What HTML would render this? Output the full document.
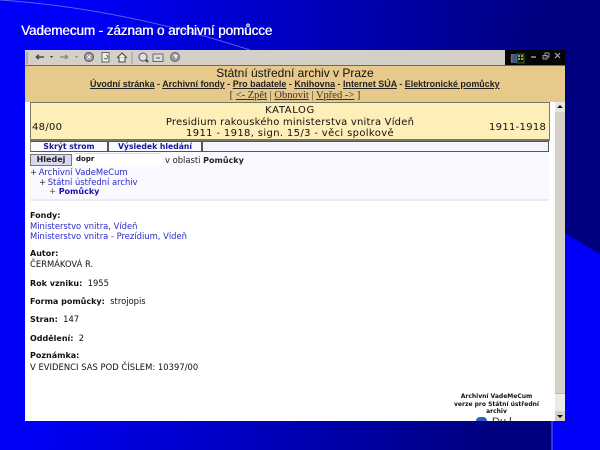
<!DOCTYPE html>
<html lang="cs"><head><meta charset="utf-8"><title>Vademecum</title>
<style>
html,body{margin:0;padding:0}
body{width:600px;height:450px;overflow:hidden;position:relative;background:#00f;font-family:"DejaVu Sans",sans-serif;color:#111}
.a{position:absolute;white-space:nowrap}
.v{font-size:8.4px;line-height:10px}
.c{font-size:10px;line-height:12px}
.b{font-weight:bold;font-size:8px}
.l{color:#2a2ac8}
.s{font-family:"Liberation Sans",sans-serif}
u{text-underline-offset:1px}
</style></head><body>
<svg class="a" style="left:0;top:0" width="600" height="450" viewBox="0 0 600 450">
<defs><linearGradient id="g" gradientUnits="userSpaceOnUse" x1="80" y1="0" x2="545" y2="60"><stop offset="0" stop-color="#0000f8"/><stop offset="1" stop-color="#00007e"/></linearGradient></defs>
<rect width="600" height="450" fill="url(#g)"/>
<path d="M552 450V420L565 233L600 254V450Z" fill="#0000fa"/>
<path d="M0 0Q120 8 250 50" fill="none" stroke="#5560ee" stroke-width="1"/>
<path d="M552 420V450" stroke="#5a70f0" fill="none"/>
</svg>
<div class="a s" style="left:21px;top:23px;font-size:13.5px;line-height:16px;color:#fff;letter-spacing:-.1px;text-shadow:.4px 0 0 #fff">Vademecum - záznam o archivní pomůcce</div>

<div class="a" style="left:25px;top:50px;width:540px;height:371px;background:#fff"></div>
<div class="a" style="left:25px;top:50px;width:480px;height:15px;background:#d4d0c8"></div>
<div class="a" style="left:505px;top:50px;width:60px;height:15px;background:#050505"></div>
<svg class="a" style="left:25px;top:50px" width="540" height="15" viewBox="25 50 540 15" fill="none">
<path d="M27 52V64" stroke="#8a8a86"/>
<path d="M36 57H44M36 57l3-2M36 57l3 2" stroke="#4a4a55" stroke-width="1.4"/>
<path d="M50 56h3l-1.500 2z" fill="#333"/>
<path d="M60 57H68M68 57l-3-2M68 57l-3 2" stroke="#8d8d95" stroke-width="1.400"/>
<path d="M75 56h3l-1.500 2z" fill="#888"/>
<circle cx="89" cy="57" r="4.500" fill="#9a9aa4" stroke="#555"/><path d="M87 55l4 4M91 55l-4 4" stroke="#eee"/>
<rect x="102" y="52.500" width="7" height="9.500" fill="#eee" stroke="#666"/><path d="M104 58a2 2 0 1 0 2-3" stroke="#4a7a4a"/>
<path d="M117 58l5-5 5 5M119 57v5h6v-5" stroke="#444" fill="#eee"/>
<path d="M132 52V64" stroke="#9a9a96"/>
<circle cx="143" cy="57" r="4" fill="#dde" stroke="#555"/><path d="M146 60l2 2" stroke="#444" stroke-width="2"/>
<rect x="153" y="54" width="10" height="7.500" fill="#ddd" stroke="#666"/><path d="M156 58h4" stroke="#555"/>
<circle cx="175" cy="57" r="4.500" fill="#9a9aa8" stroke="#666"/><path d="M173 54l5 1-2 4z" fill="#eee"/>
<rect x="511" y="54" width="6" height="9" fill="#345a9a"/><path d="M512 54q-1 5 0 9" stroke="#c05030" stroke-width="1.500"/>
<path d="M517 54h7v9h-7z" fill="#111" stroke="#3a8a3a" stroke-width=".8"/><path d="M518 56h2M521 56h2M518 59h2M521 59h2" stroke="#e0d060" stroke-width="1.500"/>
<path d="M531 57h5" stroke="#999" stroke-width="1.500"/>
<rect x="545" y="53" width="4" height="4" stroke="#999"/><rect x="543" y="55.500" width="4" height="3.500" fill="#222" stroke="#999"/>
<path d="M555 53l5 5M560 53l-5 5" stroke="#aaa" stroke-width="1.200"/>
</svg>

<div class="a" style="left:25px;top:65px;width:540px;height:37px;background:#e8c98c;border-top:1px solid #6a6a60;box-sizing:border-box"></div>
<div class="a s" style="left:25px;top:66px;width:540px;text-align:center;font-size:12px;line-height:14px;color:#111">Státní ústřední archiv v Praze</div>
<div class="a s" style="left:90px;top:79px;width:409px;text-align:center;font-size:8.950px;font-weight:bold;line-height:11px;color:#222"><u>Úvodní stránka</u> - <u>Archivní fondy</u> - <u>Pro badatele</u> - <u>Knihovna</u> - <u>Internet SÚA</u> - <u>Elektronické pomůcky</u></div>
<div class="a" style="left:25px;top:90px;width:540px;text-align:center;font-family:'Liberation Serif',serif;font-size:10.500px;line-height:12px;color:#333">[ <u>&lt;- Zpět</u> | <u>Obnovit</u> | <u>Vpřed -&gt;</u> ]</div>

<div class="a" style="left:30px;top:102px;width:520px;height:39px;box-sizing:border-box;background:#feefb8;border:1px solid #77776a;border-width:1px 1px 2px 1px"></div>
<div class="a c" style="left:30px;top:105px;width:520px;text-align:center;letter-spacing:.6px">KATALOG</div>
<div class="a c" style="left:30px;top:117px;width:520px;text-align:center;letter-spacing:.2px">Presidium rakouského ministerstva vnitra Vídeň</div>
<div class="a c" style="left:30px;top:128px;width:520px;text-align:center;letter-spacing:.35px">1911 - 1918, sign. 15/3 - věci spolkově</div>
<div class="a c" style="left:32px;top:122px;letter-spacing:.3px">48/00</div>
<div class="a c" style="left:489px;top:122px;letter-spacing:.3px">1911-1918</div>

<div class="a" style="left:30px;top:141px;width:519px;height:59px;background:#f9f9ff"></div>
<div class="a" style="left:30px;top:199px;width:519px;height:2px;background:#eaeaf6"></div>
<div class="a" style="left:30px;top:141px;width:78px;height:11px;box-sizing:border-box;border:1px solid #555;border-left-color:#888;background:#fafaff"></div>
<div class="a" style="left:108px;top:141px;width:94px;height:11px;box-sizing:border-box;border:1px solid #555;background:#fafaff"></div>
<div class="a" style="left:202px;top:141px;width:347px;height:11px;box-sizing:border-box;border:1px solid #555;background:#f4f4ff"></div>
<div class="a v" style="left:30px;top:142px;width:78px;text-align:center;color:#15159a;font-weight:bold;font-size:7.700px">Skrýt strom</div>
<div class="a v" style="left:108px;top:142px;width:94px;text-align:center;color:#15159a;font-weight:bold;font-size:7.700px">Výsledek hledání</div>

<div class="a v" style="left:30px;top:154px;width:42px;height:12px;box-sizing:border-box;border:1px solid #777;background:#d9d9ee;text-align:center;line-height:10px;color:#223;font-weight:bold;font-size:8px">Hledej</div>
<div class="a" style="left:74px;top:153px;width:87px;height:12px;background:#fff;border-top:1px solid #ddd;box-sizing:border-box"></div>
<div class="a v" style="left:76px;top:154px;color:#111;font-weight:bold;font-size:7px">dopr</div>
<div class="a v" style="left:165px;top:155px;color:#222">v oblasti <span class="b">Pomůcky</span></div>
<div class="a v" style="left:30px;top:167px;color:#333">+&nbsp;<span class="l" style="margin-left:-1px">Archivní VadeMeCum</span></div>
<div class="a v" style="left:39px;top:177px;color:#333">+&nbsp;<span class="l" style="margin-left:-1px">Státní ústřední archiv</span></div>
<div class="a v" style="left:49px;top:186px;color:#555">+ <span class="b" style="color:#1515b0">Pomůcky</span></div>

<div class="a v b" style="left:30px;top:211px">Fondy:</div>
<div class="a v l" style="left:30px;top:221px">Ministerstvo vnitra, Vídeň</div>
<div class="a v l" style="left:30px;top:231px">Ministerstvo vnitra - Prezídium, Vídeň</div>
<div class="a v b" style="left:30px;top:249px">Autor:</div>
<div class="a v" style="left:30px;top:259px">ČERMÁKOVÁ R.</div>
<div class="a v" style="left:30px;top:278px"><span class="b">Rok vzniku:</span>&nbsp; 1955</div>
<div class="a v" style="left:30px;top:296px"><span class="b">Forma pomůcky:</span>&nbsp; strojopis</div>
<div class="a v" style="left:30px;top:314px"><span class="b">Stran:</span>&nbsp; 147</div>
<div class="a v" style="left:30px;top:333px"><span class="b">Oddělení:</span>&nbsp; 2</div>
<div class="a v b" style="left:30px;top:351px">Poznámka:</div>
<div class="a v" style="left:30px;top:362px;letter-spacing:.03px">V EVIDENCI SAS POD ČÍSLEM: 10397/00</div>

<div class="a" style="left:444px;top:393px;width:105px;text-align:center;font-size:6px;font-weight:bold;line-height:7.500px;white-space:normal">Archivní VadeMeCum<br>verze pro Státní ústřední<br>archiv</div>
<div class="a" style="left:476px;top:417px;width:11px;height:4px;background:#2a60c8;border-radius:6px 6px 0 0"></div>
<div class="a" style="left:492px;top:417px;width:24px;height:4px;overflow:hidden"><div class="a s" style="left:0;top:-1px;font-size:11px;line-height:12px;color:#333">Du l</div></div>

<div class="a" style="left:555px;top:102px;width:10px;height:319px;background:#d4d0c8"></div>
<div class="a" style="left:555px;top:393px;width:10px;height:28px;background:#ebeae6;border-top:1px solid #bbb;box-sizing:border-box"></div>
<svg class="a" style="left:555px;top:102px" width="10" height="10"><rect width="10" height="10" fill="#e8e6e0"/><path d="M5 3l3 3H2z" fill="#111"/></svg>
<svg class="a" style="left:555px;top:411px" width="10" height="10"><rect width="10" height="10" fill="#d4d0c8"/><path d="M2 4h6l-3 3z" fill="#111"/></svg>
</body></html>
